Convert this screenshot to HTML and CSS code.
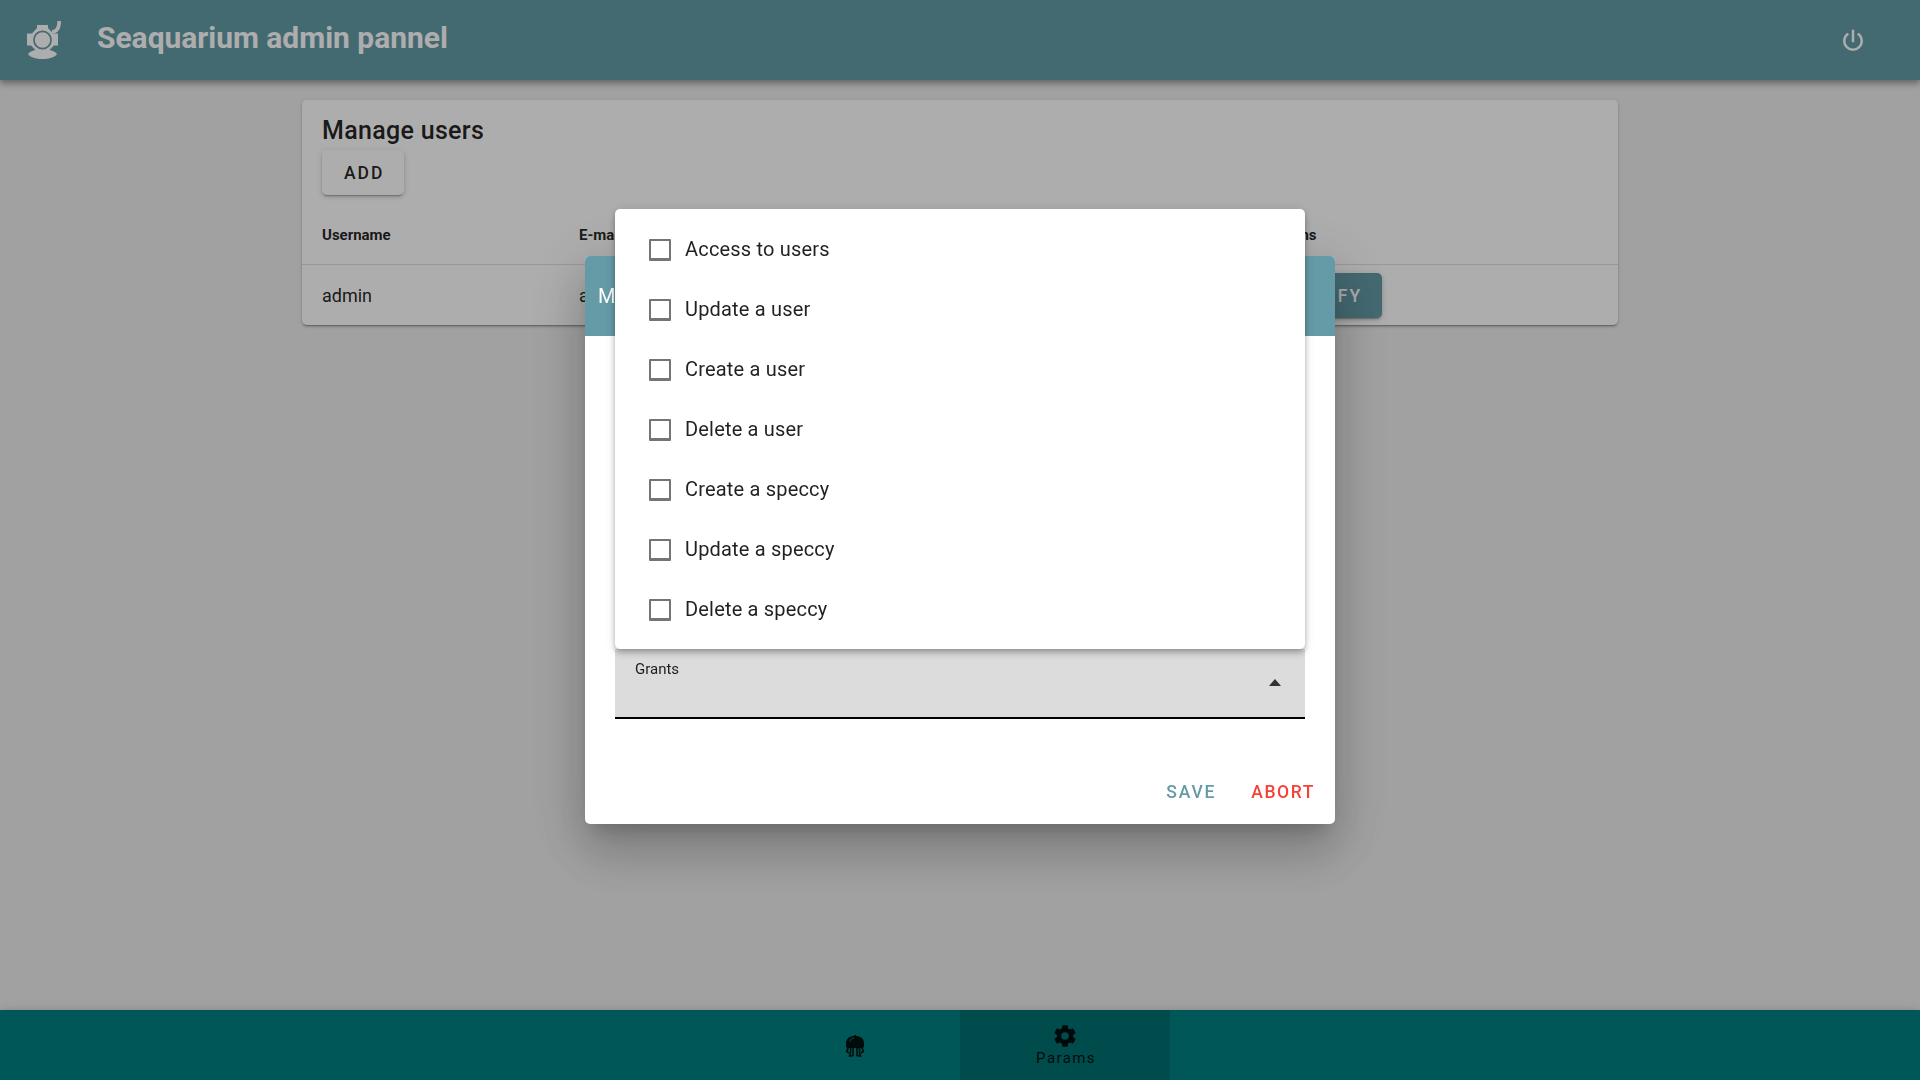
FILE: index.html
```html
<!DOCTYPE html>
<html lang="en">
<head>
<meta charset="utf-8">
<title>Seaquarium admin pannel</title>
<link rel="stylesheet" href="styles.css">
</head>
<body>
<div class="app">
  <header class="app-bar">
    <svg class="logo" viewBox="0 0 40 40" aria-hidden="true">
      <path fill="currentColor" fill-rule="evenodd" d="M14 5h11v3l5 5.500h5v12h-4l-4.500 4.500c4 .8 6.500 2.300 7.500 4-2 3.500-8 5-14.500 5S7 37.500 5 34c1-1.700 3.500-3.200 7.500-4L8 25.500H4v-12h5L14 8zM19.500 10.600a9.400 9.400 0 1 0 0 18.800 9.400 9.400 0 1 0 0-18.800z"/>
      <circle cx="19.500" cy="20" r="7.700" fill="currentColor"/>
      <path d="M29 12c4.500-.3 7.200-3.500 7.200-11" fill="none" stroke="currentColor" stroke-width="3.600"/>
    </svg>
    <h1 class="app-title">Seaquarium admin pannel</h1>
    <svg class="power" viewBox="0 0 24 24" aria-hidden="true"><path fill="currentColor" d="M16.560 5.440L15.110 6.890C16.840 7.940 18 9.830 18 12A6 6 0 0 1 12 18A6 6 0 0 1 6 12C6 9.830 7.160 7.940 8.880 6.880L7.440 5.440C5.360 6.880 4 9.280 4 12A8 8 0 0 0 12 20A8 8 0 0 0 20 12C20 9.280 18.640 6.880 16.560 5.440M13 3H11V13H13"/></svg>
  </header>

  <main class="content">
    <section class="card">
      <div class="card-head">
        <h2 class="card-title">Manage users</h2>
        <button class="btn btn-plain">ADD</button>
      </div>
      <div class="row row-head"><span>Username</span><span>E-mail</span><span>Actions</span></div>
      <div class="row row-user"><span>admin</span><span>admin</span><span><button class="btn btn-primary">MODIFY</button></span></div>
    </section>
  </main>

  <nav class="bottom-nav">
    <a class="tab">
      <svg class="jelly" viewBox="0 0 18 22" aria-hidden="true">
        <path fill="currentColor" d="M0 12V8C0 3.500 4 1 8 1V0h2v1c4 0 8 2.500 8 7v4l-1.500 1H1.500z"/>
        <path d="M3.800 6.500C4.500 4.500 6 3.300 8 2.800" fill="none" stroke="#00787a" stroke-width="1"/>
        <path d="M1.800 12.500v1.500L.8 15v1.500l2.200 1.500M16.200 12.500v1.500l1 1v1.500L15 18M4.500 12v6.500l-1 2.500H6M7 12v8.500l-1 .5M11 12v8.500l1 .5M13.500 12v6.500l1 2.500H12" fill="none" stroke="currentColor" stroke-width="1.600"/>
      </svg>
    </a>
    <a class="tab tab-active">
      <svg class="cog" viewBox="0 0 24 24" aria-hidden="true"><path fill="currentColor" d="M12 15.500A3.500 3.500 0 0 1 8.500 12A3.500 3.500 0 0 1 12 8.500A3.500 3.500 0 0 1 15.500 12A3.500 3.500 0 0 1 12 15.500M19.430 12.970C19.470 12.650 19.500 12.330 19.500 12C19.500 11.670 19.470 11.340 19.430 11L21.540 9.370C21.730 9.220 21.780 8.950 21.660 8.730L19.660 5.270C19.540 5.050 19.270 4.960 19.050 5.050L16.560 6.050C16.040 5.660 15.500 5.320 14.870 5.070L14.500 2.420C14.460 2.180 14.250 2 14 2H10C9.750 2 9.540 2.180 9.500 2.420L9.130 5.070C8.500 5.320 7.960 5.660 7.440 6.050L4.950 5.050C4.730 4.960 4.460 5.050 4.340 5.270L2.340 8.730C2.210 8.950 2.270 9.220 2.460 9.370L4.570 11C4.530 11.340 4.500 11.670 4.500 12C4.500 12.330 4.530 12.650 4.570 12.970L2.460 14.630C2.270 14.780 2.210 15.050 2.340 15.270L4.340 18.730C4.460 18.950 4.730 19.030 4.950 18.950L7.440 17.940C7.960 18.340 8.500 18.680 9.130 18.930L9.500 21.580C9.540 21.820 9.750 22 10 22H14C14.250 22 14.460 21.820 14.500 21.580L14.870 18.930C15.500 18.670 16.040 18.340 16.560 17.940L19.050 18.950C19.270 19.030 19.540 18.950 19.660 18.730L21.660 15.270C21.780 15.050 21.730 14.780 21.540 14.630L19.430 12.970Z"/></svg>
      <span class="tab-label">Params</span>
    </a>
  </nav>
</div>

<div class="scrim">
  <div class="dialog">
    <div class="dialog-head">Modify</div>
    <div class="dialog-body">
      <div class="select">
        <span class="select-label">Grants</span>
        <span class="arrow"></span>
        <ul class="menu">
          <li><i class="box"></i>Access to users</li>
          <li><i class="box"></i>Update a user</li>
          <li><i class="box"></i>Create a user</li>
          <li><i class="box"></i>Delete a user</li>
          <li><i class="box"></i>Create a speccy</li>
          <li><i class="box"></i>Update a speccy</li>
          <li><i class="box"></i>Delete a speccy</li>
        </ul>
      </div>
    </div>
    <div class="dialog-actions">
      <button class="btn btn-text save">SAVE</button>
      <button class="btn btn-text abort">ABORT</button>
    </div>
  </div>
</div>
</body>
</html>
```
FILE: styles.css
```css
* { box-sizing: border-box; }
body { margin: 0; font-family: Roboto, sans-serif; font-size: 20px; color: rgba(0, 0, 0, .87); overflow: hidden; }
h1, h2, ul { margin: 0; padding: 0; }
svg { display: block; flex: none; }

.app { height: 1080px; display: flex; flex-direction: column; background: #eee; }

.app-bar {
  height: 80px; flex: none; display: flex; align-items: center;
  padding: 0 52px 0 23px; background: #649ba7; color: #fff; z-index: 1;
  box-shadow: 0 2px 5px rgba(0, 0, 0, .2), 0 5px 6px rgba(0, 0, 0, .14), 0 1px 12px rgba(0, 0, 0, .12);
}
.logo { width: 40px; height: 40px; }
.app-title { flex: 1; margin: -5px 0 0 34px; font-size: 30px; line-height: 40px; font-weight: 700; letter-spacing: -.03px; }
.power { width: 30px; height: 30px; margin-top: 2px; }

.content { flex: 1; padding: 20px 302px; }
.card {
  height: 225px; border-radius: 5px; background: #fff;
  box-shadow: 0 3px 1px -2px rgba(0, 0, 0, .2), 0 2px 2px rgba(0, 0, 0, .14), 0 1px 5px rgba(0, 0, 0, .12);
}
.card-head { height: 105px; padding: 11px 20px 0; display: flex; flex-direction: column; align-items: flex-start; }
.card-title { font-size: 25px; line-height: 39px; font-weight: 500; letter-spacing: .3125px; }

.btn {
  height: 45px; padding: 1px 20px 0 21px; border: 0; border-radius: 5px; flex: none;
  font: 500 17.5px/44px Roboto, sans-serif; letter-spacing: 2px;
}
.btn-plain, .btn-primary {
  box-shadow: 0 3px 1px -2px rgba(0, 0, 0, .2), 0 2px 3px rgba(0, 0, 0, .14), 0 1px 6px rgba(0, 0, 0, .12);
}
.btn-plain { padding-left: 22px; background: #fff; color: rgba(0, 0, 0, .87); }
.btn-primary { background: #649ba7; color: #fff; }
.btn-text { background: none; padding: 1px 10px 0; }

.row { display: grid; grid-template-columns: 257px 686px 1fr; align-items: center; height: 60px; }
.row > span { padding-left: 20px; }
.row-head { font-size: 15px; font-weight: 700; border-bottom: 1px solid rgba(0, 0, 0, .12); }
.row-user { font-size: 18px; padding-top: 1px; }
.row-user .btn { display: block; }

.bottom-nav {
  height: 70px; flex: none; display: flex; justify-content: center; background: teal;
  box-shadow: 0 2px 5px rgba(0, 0, 0, .2), 0 1px 12px rgba(0, 0, 0, .12);
}
.tab { width: 210px; display: flex; flex-direction: column; align-items: center; justify-content: center; }
.tab-active { background: rgba(0, 0, 0, .12); }
.jelly { width: 18px; height: 22px; margin-top: 2px; }
.cog { width: 26px; height: 26px; }
.tab-label { padding-left: 2px; font-size: 15px; line-height: 18px; letter-spacing: 1.4px; }

.scrim { position: fixed; inset: 0; z-index: 2; display: flex; align-items: center; justify-content: center; background: rgba(0, 0, 0, .32); }
.dialog {
  width: 750px; height: 568px; display: flex; flex-direction: column; background: #fff; border-radius: 5px;
  box-shadow: 0 14px 19px -9px rgba(0, 0, 0, .2), 0 30px 48px 4px rgba(0, 0, 0, .14), 0 11px 58px 10px rgba(0, 0, 0, .12);
}
.dialog-head { height: 80px; padding-left: 13px; line-height: 81px; background: #649ba7; color: #fff; border-radius: 5px 5px 0 0; }
.dialog-body { flex: 1; display: flex; flex-direction: column; justify-content: flex-end; padding: 0 30px 40px; }
.select {
  position: relative; height: 70px; display: flex; align-items: center; justify-content: space-between;
  padding: 0 24px 0 20px; background: #dcdcdc; border-bottom: 2px solid #000;
}
.select-label { align-self: flex-start; margin-top: 10px; font-size: 15px; line-height: 20px; }
.arrow { margin-bottom: 2px; border: 6px solid transparent; border-top: 0; border-bottom: 7px solid #333; }
.menu {
  position: absolute; left: 0; right: 0; bottom: 100%; padding: 10px 0; list-style: none;
  background: #fff; border-radius: 5px;
  box-shadow: 0 2px 5px -1px rgba(0, 0, 0, .2), 0 5px 6px rgba(0, 0, 0, .14), 0 1px 12px rgba(0, 0, 0, .12);
}
.menu li { height: 60px; display: flex; align-items: center; gap: 14px; padding-left: 34px; letter-spacing: .1875px; }
.box { width: 22px; height: 22px; margin-top: 2px; border: 2px solid #757575; border-bottom-width: 3px; border-radius: 1px; }
.dialog-actions { height: 65px; display: flex; justify-content: flex-end; gap: 15px; padding: 10px; }
.save { color: #649ba7; letter-spacing: 1.8px; }
.abort { color: #f44336; letter-spacing: 1.6px; }
```
